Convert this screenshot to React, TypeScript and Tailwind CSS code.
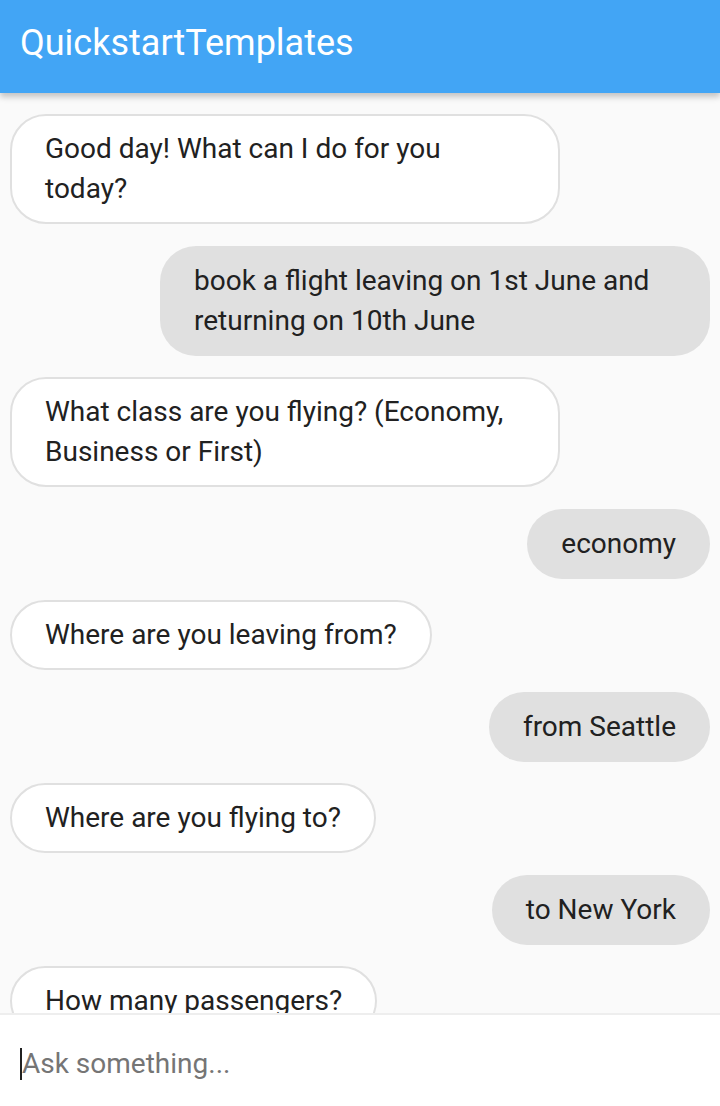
import React from "react";

const messages: { from: "bot" | "user"; text: string }[] = [
  { from: "bot", text: "Good day! What can I do for you today?" },
  { from: "user", text: "book a flight leaving on 1st June and returning on 10th June" },
  { from: "bot", text: "What class are you flying? (Economy, Business or First)" },
  { from: "user", text: "economy" },
  { from: "bot", text: "Where are you leaving from?" },
  { from: "user", text: "from Seattle" },
  { from: "bot", text: "Where are you flying to?" },
  { from: "user", text: "to New York" },
  { from: "bot", text: "How many passengers?" },
];

export default function App() {
  return (
    <div
      className="w-[720px] h-[1106px] flex flex-col bg-[#fafafa] overflow-hidden"
      style={{ fontFamily: "Roboto, 'Noto Sans', sans-serif" }}
    >
      <header className="h-[93px] shrink-0 bg-[#42a5f5] flex items-center px-5 shadow-[0_4px_6px_rgba(0,0,0,0.22)] relative z-10">
        <h1 className="text-white text-[36px] font-normal leading-none -mt-[8px]">QuickstartTemplates</h1>
      </header>
      <main className="flex-1 overflow-hidden flex flex-col gap-[21.5px] px-[10px] pt-[21px]">
        {messages.map((m, i) =>
          m.from === "bot" ? (
            <div key={i} className="flex justify-start">
              <div className="max-w-[550px] bg-white border-2 border-[#e0e0e0] rounded-[36px] px-[33px] py-[13px] text-[28px] leading-[40px] text-[#212121]">
                {m.text}
              </div>
            </div>
          ) : (
            <div key={i} className="flex justify-end">
              <div className="max-w-[550px] bg-[#e0e0e0] rounded-[36px] px-[34px] py-[15px] text-[28px] leading-[40px] text-[#212121]">
                {m.text}
              </div>
            </div>
          )
        )}
      </main>
      <div className="h-[93px] shrink-0 bg-white border-t-2 border-[#eeeeee] flex items-center px-5 pt-[6px]">
        <div className="flex items-center h-[32px]">
          <span className="w-[2px] h-[32px] bg-[#212121]" />
          <span className="text-[28px] text-[#757575] leading-none">Ask something...</span>
        </div>
      </div>
    </div>
  );
}
